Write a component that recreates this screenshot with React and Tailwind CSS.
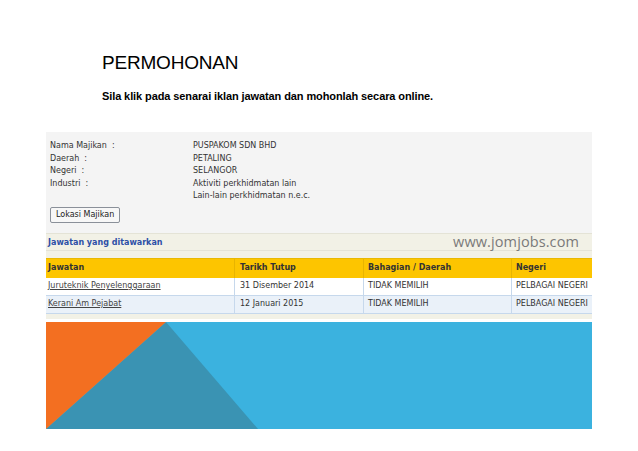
const info = [
  { label: "Nama Majikan  :", value: ["PUSPAKOM SDN BHD"] },
  { label: "Daerah  :", value: ["PETALING"] },
  { label: "Negeri  :", value: ["SELANGOR"] },
  { label: "Industri  :", value: ["Aktiviti perkhidmatan lain", "Lain-lain perkhidmatan n.e.c."] },
];

const jobs = [
  { title: "Juruteknik Penyelenggaraan", date: "31 Disember 2014", area: "TIDAK MEMILIH", state: "PELBAGAI NEGERI" },
  { title: "Kerani Am Pejabat", date: "12 Januari 2015", area: "TIDAK MEMILIH", state: "PELBAGAI NEGERI" },
];

function Banner() {
  return (
    <div className="mx-[46px] mt-[3px] h-[107px] bg-[#3bb2df]">
      <svg width="546" height="107" viewBox="0 0 546 107" preserveAspectRatio="none" className="block">
        <polygon points="0,107 120,0 212,107" fill="#3a93b3" />
        <polygon points="0,0 120,0 0,107" fill="#f36f21" />
      </svg>
    </div>
  );
}

export default function App() {
  return (
    <div className="w-[638px] h-[451px] bg-white overflow-hidden" style={{ fontFamily: "'Liberation Sans', Arial, sans-serif" }}>
      <div className="pl-[102px] pt-[52px]">
        <h1 className="text-[19px] leading-[22px] text-black tracking-[-0.2px]">PERMOHONAN</h1>
        <p className="mt-[16px] text-[11px] leading-[12px] font-bold text-black tracking-[-0.1px]">
          Sila klik pada senarai iklan jawatan dan mohonlah secara online.
        </p>
      </div>

      <div className="mx-[46px] mt-[30px] bg-[#f4f4f4] text-[#333] text-[8px]" style={{ fontFamily: "'DejaVu Sans', Verdana, sans-serif" }}>
        <div className="px-[4px] pt-[8px]">
          {info.map((row) => (
            <div key={row.label} className="flex leading-[12.5px]">
              <div className="w-[143px] whitespace-pre">{row.label}</div>
              <div>
                {row.value.map((v) => (
                  <div key={v}>{v}</div>
                ))}
              </div>
            </div>
          ))}
          <button className="mt-[4px] h-[16px] px-[5px] bg-[#f7f7f7] border border-[#8a9099] rounded-[2px] text-[8px] text-[#222] leading-none">
            Lokasi Majikan
          </button>
        </div>

        <div className="mt-[10px] bg-[#f2f1e6] border-t border-[#e4e3d6]">
          <div className="flex items-end justify-between px-[2px] h-[17px] border-b border-[#e4e3d6]">
            <span className="font-bold text-[#2d4fa7] leading-[14px]">Jawatan yang ditawarkan</span>
            <span className="text-[14.5px] leading-[17px] text-[#7a7a7a] pr-[11px] tracking-[0.1px]" style={{ fontFamily: "'Open Sans', sans-serif" }}>
              www.jomjobs.com
            </span>
          </div>
          <div className="pt-[7px] pb-[5px]">
            <div className="grid grid-cols-[189px_129px_148px_1fr] bg-[#fdc500] h-[20px] items-center font-bold text-[#333] border-t border-[#e9b800]">
              <div className="px-[2px] h-full flex items-center border-r border-[#e8b400]">Jawatan</div>
              <div className="px-[5px] h-full flex items-center border-r border-[#e8b400]">Tarikh Tutup</div>
              <div className="px-[4px] h-full flex items-center border-r border-[#e8b400]">Bahagian / Daerah</div>
              <div className="px-[4px] h-full flex items-center">Negeri</div>
            </div>
            {jobs.map((j, i) => (
              <div
                key={j.title}
                className={`grid grid-cols-[189px_129px_148px_1fr] h-[18px] items-center border-b border-[#c6d8ec] ${i === 1 ? "bg-[#eaf1f9]" : "bg-white"}`}
              >
                <div className="px-[2px] h-full flex items-center border-r border-[#c6d8ec] underline text-[#444]">{j.title}</div>
                <div className="px-[5px] h-full flex items-center border-r border-[#c6d8ec]">{j.date}</div>
                <div className="px-[4px] h-full flex items-center border-r border-[#c6d8ec]">{j.area}</div>
                <div className="px-[4px] h-full flex items-center whitespace-nowrap overflow-hidden">{j.state}</div>
              </div>
            ))}
          </div>
        </div>
      </div>

      <Banner />
    </div>
  );
}
